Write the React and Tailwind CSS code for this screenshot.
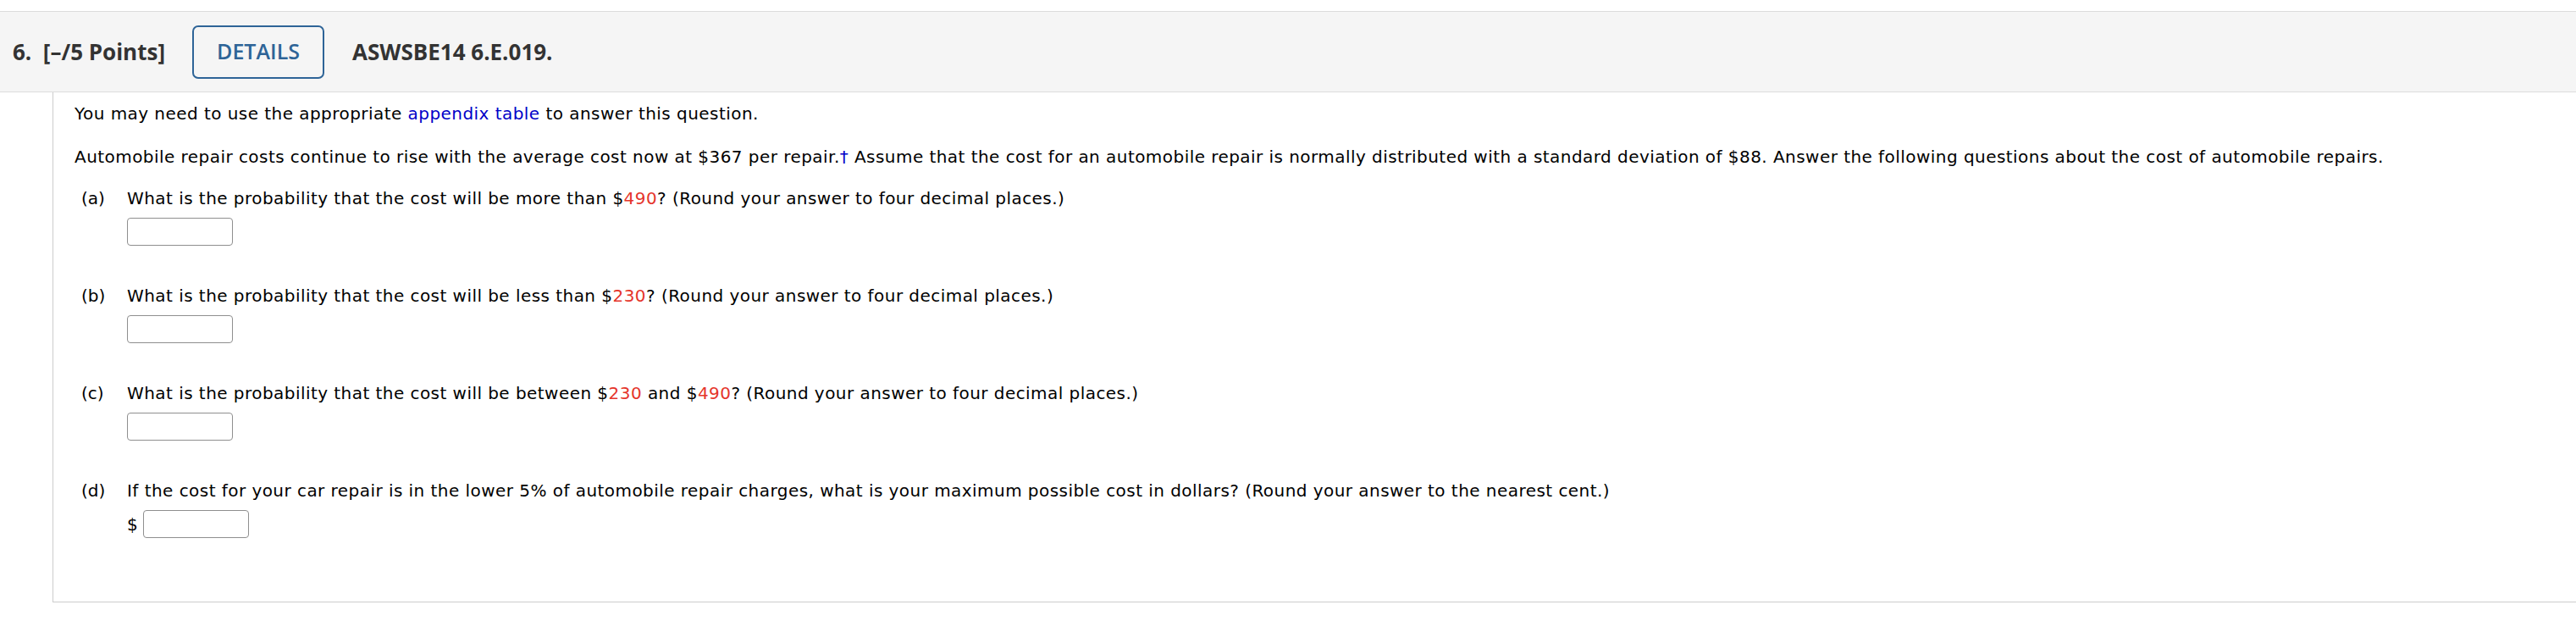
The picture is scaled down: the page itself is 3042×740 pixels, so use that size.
import React from 'react';

const body = { fontFamily: '"DejaVu Sans", Verdana, sans-serif' };
const head = { fontFamily: '"Open Sans", Arial, sans-serif' };

const Red = ({ children }) => <span className="text-[#e5352b]">{children}</span>;

const AnswerBox = () => (
  <input
    type="text"
    className="h-[33px] w-[125px] rounded-[4px] border border-[#8f8f8f] bg-white"
  />
);

const Question = ({ label, children, prefix, first }) => (
  <div className={first ? 'mt-[23px]' : 'mt-[46px]'}>
    <div className="flex leading-[26px]">
      <span className="w-[62px] shrink-0 pl-[8px] tracking-normal">{label}</span>
      <span>{children}</span>
    </div>
    <div className="mt-[10px] flex items-center pl-[62px]">
      {prefix && <span className="mr-[6px] leading-[26px]">{prefix}</span>}
      <AnswerBox />
    </div>
  </div>
);

export default function App() {
  return (
    <div className="min-h-[740px] bg-white pt-[13px]">
      {/* question header */}
      <div
        className="flex h-[96px] items-center border-y border-[#dcdcdc] bg-[#f5f5f5] pl-[15px] text-[#333]"
        style={head}
      >
        <span className="text-[26px] font-bold whitespace-pre">6.  [–/5 Points]</span>
        <button className="ml-[32px] h-[63px] w-[156px] rounded-[7px] border-2 border-[#2e6497] text-[25px] font-semibold text-[#2e6497]">
          DETAILS
        </button>
        <span className="ml-[33px] text-[26px] font-bold">ASWSBE14 6.E.019.</span>
      </div>

      {/* question body */}
      <div
        className="ml-[62px] border-b border-l border-[#cccccc] pt-[12px] pb-[75px] pl-[25px] text-[20px] tracking-[0.45px] text-black"
        style={body}
      >
        <p className="leading-[26px]">
          You may need to use the appropriate{' '}
          <a className="text-[#0000c8]">appendix table</a> to answer this question.
        </p>
        <p className="mt-[25px] leading-[26px]">
          Automobile repair costs continue to rise with the average cost now at $367 per repair.
          <span className="text-[#0000c8]">†</span> Assume that the cost for an automobile repair is
          normally distributed with a standard deviation of $88. Answer the following questions about
          the cost of automobile repairs.
        </p>

        <Question label="(a)" first>
          What is the probability that the cost will be more than $<Red>490</Red>? (Round your answer to
          four decimal places.)
        </Question>
        <Question label="(b)">
          What is the probability that the cost will be less than $<Red>230</Red>? (Round your answer to
          four decimal places.)
        </Question>
        <Question label="(c)">
          What is the probability that the cost will be between $<Red>230</Red> and $<Red>490</Red>? (Round
          your answer to four decimal places.)
        </Question>
        <Question label="(d)" prefix="$">
          If the cost for your car repair is in the lower 5% of automobile repair charges, what is your
          maximum possible cost in dollars? (Round your answer to the nearest cent.)
        </Question>
      </div>
    </div>
  );
}
